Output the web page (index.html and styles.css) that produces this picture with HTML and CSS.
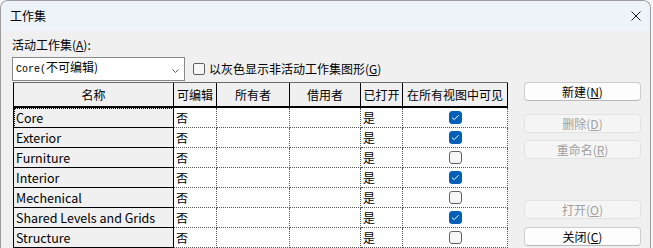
FILE: index.html
```html
<!DOCTYPE html>
<html lang="zh-CN">
<head>
    <meta charset="UTF-8">
    <title>工作集</title>
    <link rel="stylesheet" href="styles.css">
</head>
<body>
    <div class="dialog">
        <div class="titlebar">
            <span class="title">工作集</span>
            <svg class="close" width="10" height="10" viewBox="0 0 10 10">
                <path d="M0.5 0.5 L9.5 9.5 M9.5 0.5 L0.5 9.5" stroke="#1a1a1a" stroke-width="1" fill="none"/>
            </svg>
        </div>

        <div class="content">
            <div class="field-label">活动工作集(<u>A</u>):</div>

            <div class="active-row">
                <div class="combo">
                    <span class="combo-text"><span class="mono">Core(</span>不可编辑)</span>
                    <svg class="chevron" width="7" height="4" viewBox="0 0 7 4">
                        <path d="M0.5 0.5 L3.5 3.5 L6.5 0.5" stroke="#5c5c5c" stroke-width="1" fill="none"/>
                    </svg>
                </div>
                <label class="check">
                    <span class="box"></span>
                    <span>以灰色显示非活动工作集图形(<u>G</u>)</span>
                </label>
            </div>

            <div class="main">
                <div class="grid-frame">
                    <div class="grid">
                        <div class="hcell">名称</div>
                        <div class="hcell">可编辑</div>
                        <div class="hcell">所有者</div>
                        <div class="hcell">借用者</div>
                        <div class="hcell">已打开</div>
                        <div class="hcell">在所有视图中可见</div>

                        <div class="name focus">Core</div>
                        <div class="cell">否</div><div class="cell"></div><div class="cell"></div><div class="cell">是</div>
                        <div class="cell center"><span class="cb checked"><svg width="11" height="11" viewBox="0 0 11 11"><path d="M2 5.6 L4.3 7.6 L8.6 3.2" stroke="#fff" stroke-width="1" fill="none"/></svg></span></div>

                        <div class="name">Exterior</div>
                        <div class="cell">否</div><div class="cell"></div><div class="cell"></div><div class="cell">是</div>
                        <div class="cell center"><span class="cb checked"><svg width="11" height="11" viewBox="0 0 11 11"><path d="M2 5.6 L4.3 7.6 L8.6 3.2" stroke="#fff" stroke-width="1" fill="none"/></svg></span></div>

                        <div class="name">Furniture</div>
                        <div class="cell">否</div><div class="cell"></div><div class="cell"></div><div class="cell">是</div>
                        <div class="cell center"><span class="cb"></span></div>

                        <div class="name">Interior</div>
                        <div class="cell">否</div><div class="cell"></div><div class="cell"></div><div class="cell">是</div>
                        <div class="cell center"><span class="cb checked"><svg width="11" height="11" viewBox="0 0 11 11"><path d="M2 5.6 L4.3 7.6 L8.6 3.2" stroke="#fff" stroke-width="1" fill="none"/></svg></span></div>

                        <div class="name">Mechenical</div>
                        <div class="cell">否</div><div class="cell"></div><div class="cell"></div><div class="cell">是</div>
                        <div class="cell center"><span class="cb"></span></div>

                        <div class="name">Shared Levels and Grids</div>
                        <div class="cell">否</div><div class="cell"></div><div class="cell"></div><div class="cell">是</div>
                        <div class="cell center"><span class="cb checked"><svg width="11" height="11" viewBox="0 0 11 11"><path d="M2 5.6 L4.3 7.6 L8.6 3.2" stroke="#fff" stroke-width="1" fill="none"/></svg></span></div>

                        <div class="name">Structure</div>
                        <div class="cell">否</div><div class="cell"></div><div class="cell"></div><div class="cell">是</div>
                        <div class="cell center"><span class="cb"></span></div>
                    </div>
                </div>

                <div class="actions">
                    <button class="btn btn-new">新建(<u>N</u>)</button>
                    <button class="btn btn-delete" disabled>删除(<u>D</u>)</button>
                    <button class="btn btn-rename" disabled>重命名(<u>R</u>)</button>
                    <button class="btn btn-open" disabled>打开(<u>O</u>)</button>
                    <button class="btn btn-close">关闭(<u>C</u>)</button>
                </div>
            </div>
        </div>
    </div>
</body>
</html>
```

FILE: styles.css
```css
html, body {
    margin: 0;
    padding: 0;
}
body {
    width: 653px;
    height: 248px;
    overflow: hidden;
    background-color: #f7f7f7;
    font-family: "Noto Sans CJK SC", sans-serif;
    font-size: 12px;
    color: #000;
}
u {
    text-decoration: underline;
    text-underline-offset: 1px;
}
.dialog {
    width: 649px;
    height: 247px;
    border: 1px solid #9c9c9c;
    border-bottom: none;
    border-radius: 8px 8px 0 0;
    background-color: #f0f0f0;
    overflow: hidden;
}
.titlebar {
    height: 30px;
    display: flex;
    align-items: center;
    justify-content: space-between;
    padding: 0 9px;
    background-color: #eef2f9;
}
.title {
    line-height: 14px;
}
.content {
    padding: 7px 0 0 11px;
}
.field-label {
    height: 14px;
    line-height: 14px;
}
.active-row {
    display: flex;
    align-items: center;
    margin-top: 5px;
    height: 24px;
}
.combo {
    box-sizing: border-box;
    width: 173px;
    height: 24px;
    border: 1px solid #8a8a8a;
    background-color: #fff;
    display: flex;
    justify-content: space-between;
    padding: 1px 5px 0 3px;
}
.combo-text {
    line-height: 16px;
}
.mono {
    font-family: "Liberation Mono", monospace;
    font-size: 10px;
}
.chevron {
    margin-top: 10px;
}
.check {
    display: flex;
    align-items: center;
    margin-left: 8px;
    gap: 4px;
    line-height: 14px;
}
.box {
    box-sizing: border-box;
    width: 12px;
    height: 12px;
    border: 1px solid #5f5f5f;
    border-radius: 2px;
    background-color: #f7f7f7;
}
.main {
    display: flex;
    gap: 16px;
    margin-top: 1px;
    margin-left: 1px;
}
.grid-frame {
    border-top: 1px solid #6a6a6a;
    border-left: 1px solid #000;
}
.grid {
    display: grid;
    grid-template-columns: 160px 43px 73px 71px 42px 105px;
    grid-auto-rows: 20px;
    grid-template-rows: 25px;
}
.hcell, .name, .cell {
    box-sizing: border-box;
    display: flex;
    align-items: center;
    white-space: nowrap;
    overflow: hidden;
}
.hcell {
    justify-content: center;
    background-color: #f0f0f0;
    border-right: 1px solid #000;
    border-bottom: 2px solid #000;
}
.name {
    padding-left: 2px;
    font-size: 12.5px;
    background-color: #f0f0f0;
    border-right: 1px solid #000;
    border-bottom: 1px solid #000;
}
.name.focus {
    outline: 1px dotted #000;
    outline-offset: -1px;
}
.cell {
    padding-left: 2px;
    background-color: #fff;
    border-right: 1px dotted #555;
    border-bottom: 1px dotted #555;
}
.cell.center {
    justify-content: center;
    padding-left: 0;
}
.cb {
    box-sizing: border-box;
    display: flex;
    width: 13px;
    height: 13px;
    border: 1px solid #626262;
    border-radius: 3px;
    background-color: #f6f6f6;
}
.cb.checked {
    border-color: #005fb8;
    background-color: #005fb8;
}
.actions {
    display: flex;
    flex-direction: column;
    width: 117px;
}
.btn {
    box-sizing: border-box;
    height: 19px;
    padding: 0;
    border: 1px solid #cdcdcd;
    border-bottom-color: #b9b9b9;
    border-radius: 4px;
    background-color: #fdfdfd;
    font-family: "Noto Sans CJK SC", sans-serif;
    font-size: 12px;
    line-height: 16px;
    color: #000;
}
.btn:disabled {
    border-color: #e3e3e3;
    background-color: #f5f5f5;
    color: #9f9f9f;
}
.btn-delete {
    margin-top: 13px;
}
.btn-rename {
    margin-top: 7px;
}
.btn-open {
    margin-top: 41px;
}
.btn-close {
    margin-top: 8px;
}
```
